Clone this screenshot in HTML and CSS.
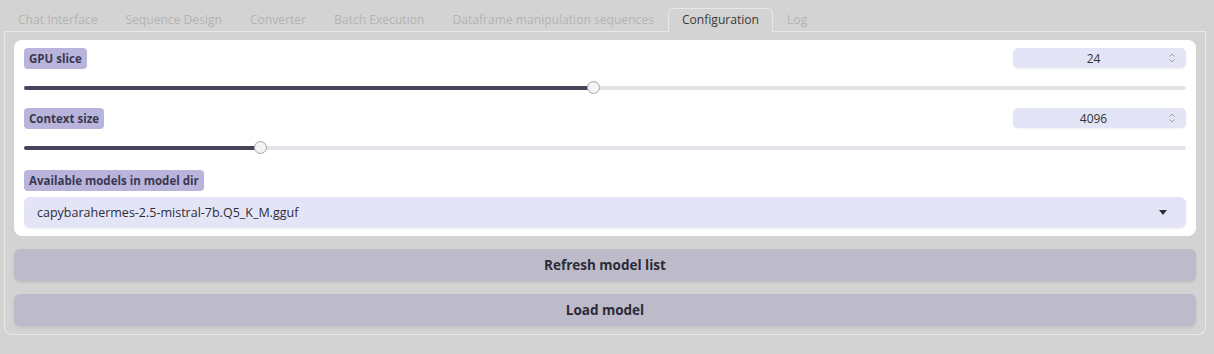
FILE: index.html
```html
<!DOCTYPE html>
<html lang="en">
<head>
    <meta charset="UTF-8">
    <meta name="viewport" content="width=device-width, initial-scale=1.0">
    <title>Configuration</title>
    <link rel="stylesheet" href="styles.css">
</head>
<body>
    <div class="app">
        <!-- Barra de pestañas -->
        <div class="tabs">
            <div class="tab">Chat Interface</div>
            <div class="tab">Sequence Design</div>
            <div class="tab">Converter</div>
            <div class="tab">Batch Execution</div>
            <div class="tab">Dataframe manipulation sequences</div>
            <div class="tab active">Configuration</div>
            <div class="tab">Log</div>
        </div>

        <div class="panel">
            <div class="card">
                <div class="block">
                    <div class="block-head">
                        <span class="badge">GPU slice</span>
                        <div class="number">
                            <span>24</span>
                            <svg class="spin" width="8" height="12" viewBox="0 0 8 12"><path d="M1.5 4.5 L4 2 L6.5 4.5 M1.5 7.5 L4 10 L6.5 7.5" fill="none" stroke="#9a9aa6" stroke-width="1"/></svg>
                        </div>
                    </div>
                    <div class="slider">
                        <div class="track"></div>
                        <div class="fill" style="width: 48.97%"><span class="thumb"></span></div>
                    </div>
                </div>

                <div class="block">
                    <div class="block-head">
                        <span class="badge">Context size</span>
                        <div class="number">
                            <span>4096</span>
                            <svg class="spin" width="8" height="12" viewBox="0 0 8 12"><path d="M1.5 4.5 L4 2 L6.5 4.5 M1.5 7.5 L4 10 L6.5 7.5" fill="none" stroke="#9a9aa6" stroke-width="1"/></svg>
                        </div>
                    </div>
                    <div class="slider">
                        <div class="track"></div>
                        <div class="fill" style="width: 20.31%"><span class="thumb"></span></div>
                    </div>
                </div>

                <div class="block last">
                    <span class="badge">Available models in model dir</span>
                    <div class="dropdown">
                        <span>capybarahermes-2.5-mistral-7b.Q5_K_M.gguf</span>
                        <svg width="8" height="5" viewBox="0 0 8 5"><path d="M0 0 H8 L4 5 Z" fill="#2e2c3a"/></svg>
                    </div>
                </div>
            </div>

            <button class="btn">Refresh model list</button>
            <button class="btn">Load model</button>
        </div>
    </div>
</body>
</html>
```

FILE: styles.css
```css
body {
    font-family: "Open Sans", "DejaVu Sans", sans-serif;
    background-color: #d3d3d3;
    margin: 0;
    padding: 0;
    color: #2e2c3a;
}
.app {
    padding: 8px 8px 0 4px;
}

/* Pestañas */
.tabs {
    display: flex;
    height: 23px;
    border-bottom: 1px solid #e8e8e8;
}
.tab {
    padding: 0 14px;
    font-size: 12.1px;
    line-height: 23px;
    color: #b3b3b3;
    white-space: nowrap;
}
.tab.active {
    color: #3a3a3a;
    border: 1px solid #e8e8e8;
    border-bottom: none;
    border-radius: 6px 6px 0 0;
    background-color: #d3d3d3;
    line-height: 22px;
    margin-bottom: -1px;
    padding: 0 13px;
}

.panel {
    border: 1px solid #e8e8e8;
    border-top: none;
    border-radius: 0 0 8px 8px;
    padding: 8px 9px 8px 9px;
}
.card {
    background-color: white;
    border-radius: 8px;
    padding: 8px 10px 8px 10px;
}
.block {
    margin-bottom: 14px;
}
.block.last {
    margin-bottom: 0;
}
.block-head {
    display: flex;
    justify-content: space-between;
    align-items: flex-start;
}
.badge {
    display: inline-block;
    background-color: #b9b4dc;
    color: #3b3850;
    font-size: 11.5px;
    font-weight: bold;
    line-height: 21px;
    padding: 0 5px;
    border-radius: 4px;
}
.number {
    width: 173px;
    height: 20px;
    background-color: #e4e4f7;
    border-radius: 5px;
    box-shadow: 0 1px 2px rgba(0, 0, 0, 0.06);
    display: flex;
    align-items: center;
    font-size: 12px;
    color: #333;
    position: relative;
}
.number span {
    flex: 1;
    text-align: center;
    padding-right: 12px;
}
.number .spin {
    position: absolute;
    right: 10px;
    top: 4px;
}

/* Deslizador */
.slider {
    position: relative;
    height: 13px;
    margin-top: 12px;
}
.track {
    position: absolute;
    left: 0;
    right: 0;
    top: 5px;
    height: 4px;
    background-color: #e4e4e8;
    border-radius: 2px;
}
.fill {
    position: absolute;
    left: 0;
    top: 5px;
    height: 4px;
    background-color: #47445a;
    border-radius: 2px;
}
.thumb {
    position: absolute;
    right: -7px;
    top: -5px;
    width: 13px;
    height: 13px;
    border-radius: 50%;
    background-color: #f4f4f4;
    border: 1px solid #a8a8a8;
    box-sizing: border-box;
}

.dropdown {
    margin-top: 6px;
    height: 31px;
    background-color: #e4e4f7;
    border-radius: 6px;
    box-shadow: 0 1px 2px rgba(0, 0, 0, 0.06);
    display: flex;
    align-items: center;
    justify-content: space-between;
    padding: 0 19px 0 13px;
    font-size: 12.5px;
    color: #2e2c3a;
}

.btn {
    display: block;
    width: 100%;
    height: 32px;
    margin-top: 13px;
    border: none;
    border-radius: 6px;
    background-color: #bdbbc9;
    color: #2c2a38;
    font-family: inherit;
    font-size: 13.5px;
    font-weight: bold;
    box-shadow: 0 2px 3px rgba(0, 0, 0, 0.08);
}
```
